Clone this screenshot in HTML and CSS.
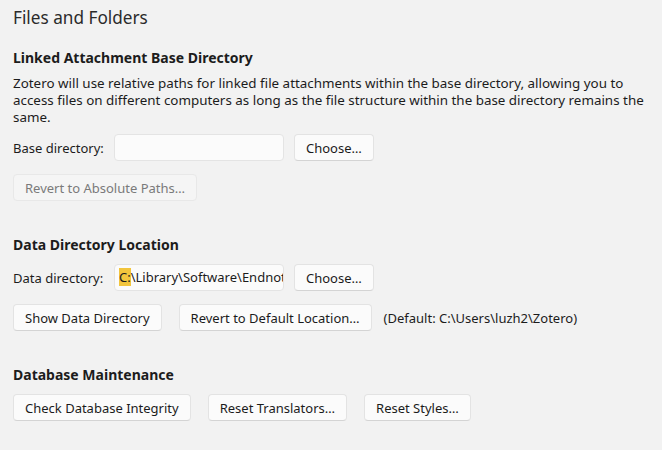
FILE: index.html
```html
<!DOCTYPE html>
<html>
<head>
<meta charset="utf-8">
<link rel="stylesheet" href="styles.css">
</head>
<body>
<div class="pane">
  <h1 class="title">Files and Folders</h1>

  <section class="group first">
    <h2 class="heading">Linked Attachment Base Directory</h2>
    <p class="desc">Zotero will use relative paths for linked file attachments within the base directory, allowing you to access files on different computers as long as the file structure within the base directory remains the same.</p>
    <div class="row after-desc">
      <label class="label">Base directory:</label>
      <div class="field"></div>
      <button class="btn">Choose…</button>
    </div>
    <div class="row">
      <button class="btn disabled">Revert to Absolute Paths…</button>
    </div>
  </section>

  <section class="group">
    <h2 class="heading">Data Directory Location</h2>
    <div class="row after-heading">
      <label class="label">Data directory:</label>
      <div class="field"><span class="sel">C:</span>\Library\Software\Endnote\Zotero</div>
      <button class="btn">Choose…</button>
    </div>
    <div class="row">
      <button class="btn">Show Data Directory</button>
      <button class="btn">Revert to Default Location…</button>
      <span class="note">(Default: C:\Users\luzh2\Zotero)</span>
    </div>
  </section>

  <section class="group">
    <h2 class="heading">Database Maintenance</h2>
    <div class="row after-heading">
      <button class="btn">Check Database Integrity</button>
      <button class="btn">Reset Translators…</button>
      <button class="btn">Reset Styles…</button>
    </div>
  </section>
</div>
</body>
</html>
```
FILE: styles.css
```css
html, body {
  margin: 0;
  padding: 0;
  background: #f2f2f2;
}
body {
  font-family: "Noto Sans", "Open Sans", sans-serif;
  font-size: 13px;
  color: #1c1c1c;
}
.pane {
  padding: 4px 13px 0 13px;
}
.title {
  margin: 0;
  font-size: 17.2px;
  font-weight: 400;
  line-height: 28px;
  color: #2b2b2b;
}
.group {
  margin-top: 34px;
}
.group.first {
  margin-top: 16px;
}
.heading {
  margin: 0;
  font-size: 14px;
  font-weight: 700;
  line-height: 20px;
  color: #1c1c1c;
}
.desc {
  margin: 7px 0 0 0;
  font-size: 13.4px;
  line-height: 17px;
}
.row {
  display: flex;
  align-items: center;
  gap: 17px;
  margin-top: 13px;
}
.row.after-desc {
  margin-top: 8px;
}
.row.after-heading {
  margin-top: 9px;
}
.label {
  width: 91px;
  flex: none;
  margin-right: -7px;
  white-space: nowrap;
}
.field {
  width: 164px;
  height: 25px;
  background: #fbfbfb;
  border: 1px solid #e4e4e4;
  border-radius: 4px;
  overflow: hidden;
  white-space: nowrap;
  line-height: 25px;
  padding-left: 4px;
  margin-right: -7px;
}
.sel {
  background: #f2c53d;
}
.btn {
  font: inherit;
  color: #1b1b1b;
  height: 27px;
  padding: 0 11px;
  background: #fbfbfb;
  border: 1px solid #e3e3e3;
  border-bottom-color: #d4d4d4;
  border-radius: 4px;
}
.btn.disabled {
  color: #7a7a7a;
  background: #f5f5f5;
  border-color: #e8e8e8;
}
.note {
  margin-left: -5px;
}
```
